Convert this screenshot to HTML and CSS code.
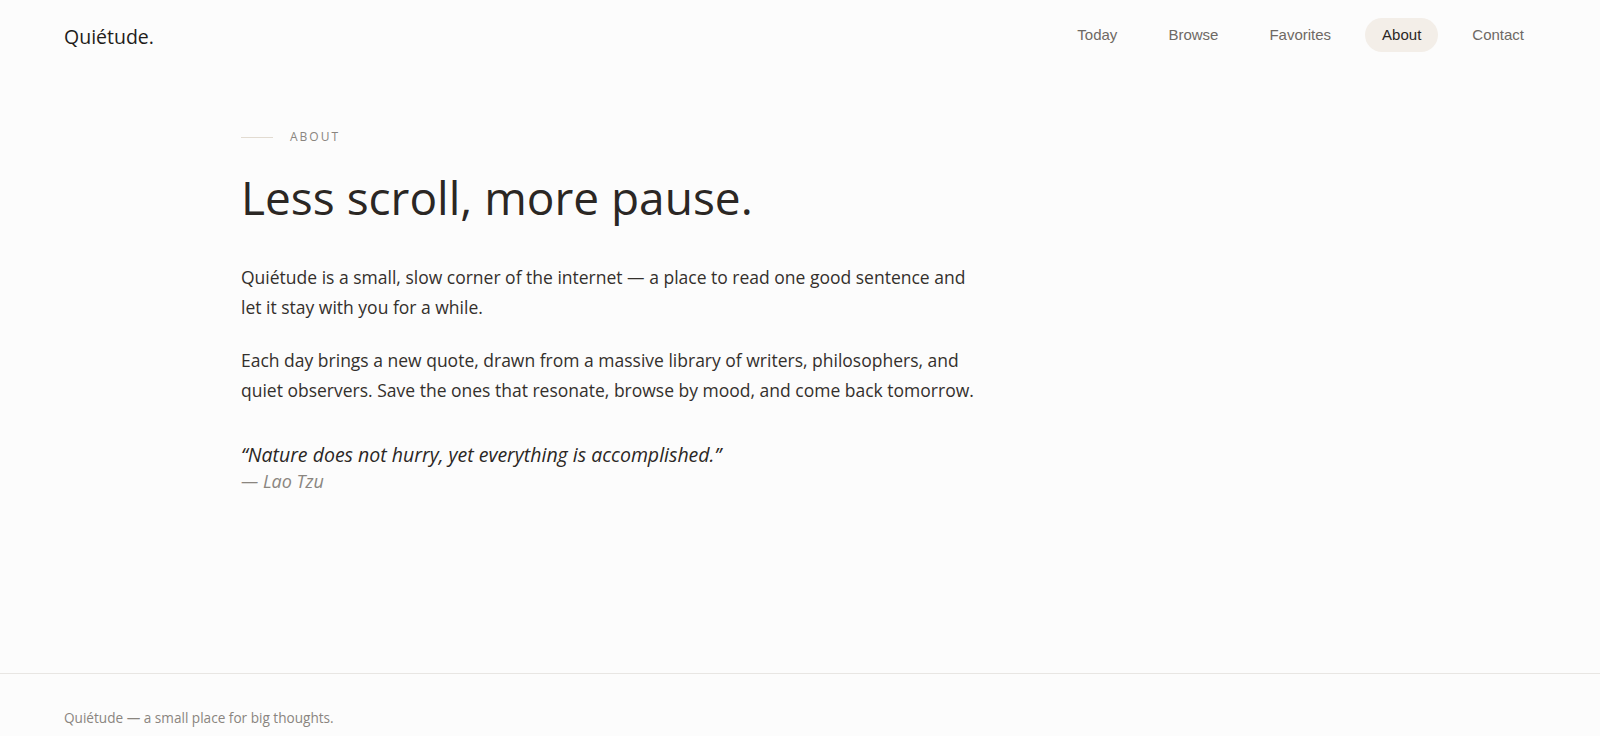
FILE: index.html
```html
<!DOCTYPE html>
<html lang="en">
<head>
<meta charset="utf-8">
<title>About — Quiétude.</title>
<link rel="stylesheet" href="styles.css">
</head>
<body>
<header class="site-header">
  <a class="logo" href="#">Quiétude.</a>
  <nav class="nav">
    <a class="nav-link" href="#">Today</a>
    <a class="nav-link" href="#">Browse</a>
    <a class="nav-link" href="#">Favorites</a>
    <a class="nav-link is-active" href="#">About</a>
    <a class="nav-link" href="#">Contact</a>
  </nav>
</header>
<main class="main">
  <section class="about">
    <div class="eyebrow"><span class="eyebrow-line"></span><span class="eyebrow-text">About</span></div>
    <h1 class="title">Less scroll, more pause.</h1>
    <p class="lead">Quiétude is a small, slow corner of the internet — a place to read one good sentence and let it stay with you for a while.</p>
    <p class="lead">Each day brings a new quote, drawn from a massive library of writers, philosophers, and quiet observers. Save the ones that resonate, browse by mood, and come back tomorrow.</p>
    <blockquote class="quote">
      <p class="quote-text">“Nature does not hurry, yet everything is accomplished.”</p>
      <cite class="quote-author">— Lao Tzu</cite>
    </blockquote>
  </section>
</main>
<footer class="site-footer">
  <p class="footer-text">Quiétude — a small place for big thoughts.</p>
</footer>
</body>
</html>
```

FILE: styles.css
```css
* { box-sizing: border-box; }
html, body { margin: 0; padding: 0; }
body {
  background: #fcfcfc;
  color: #2b2724;
  font-family: "Open Sans", "Noto Sans", sans-serif;
}
a { text-decoration: none; color: inherit; }

.site-header {
  display: flex;
  align-items: center;
  justify-content: space-between;
  padding: 18px 59px 18px 64px;
}
.logo {
  font-size: 19.5px;
  font-weight: 500;
  color: #1f1c1a;
  padding-top: 2px;
}
.nav {
  display: flex;
  align-items: center;
  gap: 17px;
}
.nav-link {
  font-family: "Liberation Sans", Arial, sans-serif;
  font-size: 15px;
  line-height: 18px;
  color: #6e6964;
  padding: 8px 17px;
  border-radius: 999px;
}
.nav-link.is-active {
  background: #f3eee8;
  color: #2b2724;
}

.main {
  padding: 59px 0 180px 241px;
}
.about {
  max-width: 742px;
}
.eyebrow {
  display: flex;
  align-items: center;
  gap: 17px;
}
.eyebrow-line {
  width: 32px;
  height: 1px;
  background: #e2dbd1;
}
.eyebrow-text {
  font-size: 12px;
  line-height: 16px;
  letter-spacing: 2px;
  text-transform: uppercase;
  color: #8a857f;
}
.title {
  margin: 26px 0 39px;
  font-size: 46px;
  line-height: 1.15;
  font-weight: 400;
  color: #2b2724;
}
.lead {
  margin: 0 0 24px;
  font-size: 17.5px;
  line-height: 29.7px;
  color: #34302c;
}
.lead:last-of-type { margin-bottom: 0; }
.quote {
  margin: 35px 0 0;
}
.quote-text {
  margin: 0;
  font-size: 19.5px;
  line-height: 28px;
  font-style: italic;
  color: #2b2724;
}
.quote-author {
  display: block;
  font-size: 18px;
  line-height: 24px;
  font-style: italic;
  color: #8a857f;
}

.site-footer {
  border-top: 1px solid #e8e6e3;
  padding: 34px 64px 32px;
}
.footer-text {
  margin: 0;
  font-size: 13.6px;
  line-height: 20px;
  color: #8a857f;
}
```
